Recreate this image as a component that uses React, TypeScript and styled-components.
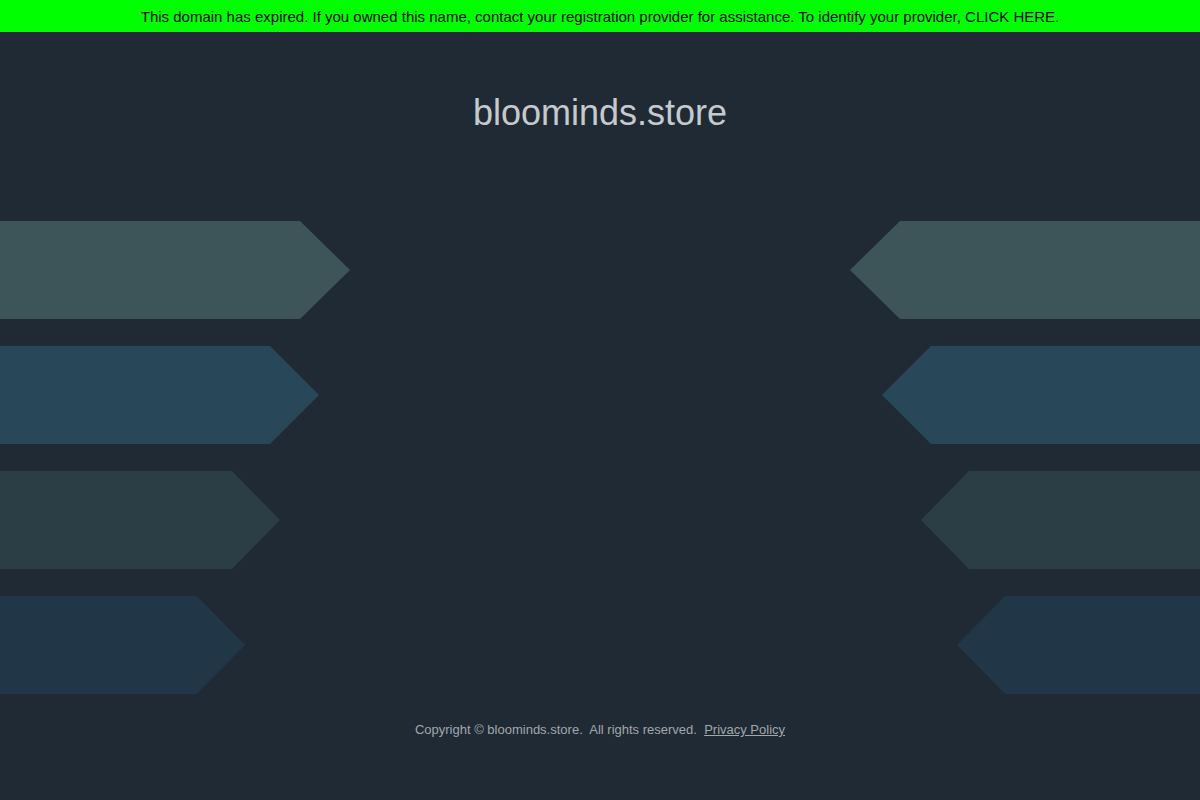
import styled, { createGlobalStyle } from "styled-components";

const GlobalStyle = createGlobalStyle`
  html, body {
    margin: 0;
    padding: 0;
    background: #1f2a35;
    font-family: "Liberation Sans", Arial, sans-serif;
  }
`;

type Side = "left" | "right";

const rows = [
  { left: 300, right: 300, tip: 50, color: "#3d5559" },
  { left: 270, right: 269, tip: 49, color: "#284859" },
  { left: 232, right: 231, tip: 48, color: "#2b3e46" },
  { left: 197, right: 195, tip: 48, color: "#213646" },
];

export default function App() {
  return (
    <Page>
      <GlobalStyle />
      <Banner>
        This domain has expired. If you owned this name, contact your registration provider for
        assistance. To identify your provider, <BannerLink href="#">CLICK HERE</BannerLink>.
      </Banner>
      <Title>bloominds.store</Title>
      <Bars>
        {rows.map((row) => (
          <Row key={row.color}>
            <Arrow>
              <ArrowBody $width={row.left} $color={row.color} />
              <ArrowTip side="left" $width={row.tip} $color={row.color} />
            </Arrow>
            <Arrow>
              <ArrowTip side="right" $width={row.tip} $color={row.color} />
              <ArrowBody $width={row.right} $color={row.color} />
            </Arrow>
          </Row>
        ))}
      </Bars>
      <Footer>
        Copyright © bloominds.store.&nbsp; All rights reserved.&nbsp;{" "}
        <FooterLink href="#">Privacy Policy</FooterLink>
      </Footer>
    </Page>
  );
}

const Page = styled.div`
  min-height: 800px;
  background: #1f2a35;
  display: flex;
  flex-direction: column;
`;

const Banner = styled.div`
  height: 32px;
  background: #00ff00;
  color: #0a0a0a;
  font-size: 15px;
  line-height: 34px;
  text-align: center;
`;

const BannerLink = styled.a`
  color: #0a0a0a;
  text-decoration: none;
`;

const Title = styled.h1`
  margin: 0;
  padding-top: 60px;
  font-size: 36px;
  line-height: 42px;
  font-weight: normal;
  color: #c7cacd;
  text-align: center;
`;

const Bars = styled.div`
  margin-top: 87px;
  display: flex;
  flex-direction: column;
  gap: 27px;
`;

const Row = styled.div`
  height: 98px;
  display: flex;
  justify-content: space-between;
`;

const Arrow = styled.div`
  display: flex;
  height: 100%;
`;

const ArrowBody = styled.div<{ $width: number; $color: string }>`
  width: ${(p) => p.$width}px;
  height: 100%;
  background: ${(p) => p.$color};
`;

const ArrowTip = styled.div<{ side: Side; $width: number; $color: string }>`
  width: ${(p) => p.$width}px;
  height: 100%;
  background: ${(p) => p.$color};
  clip-path: ${(p) =>
    p.side === "left"
      ? "polygon(0 0, 0 100%, 100% 50%)"
      : "polygon(100% 0, 100% 100%, 0 50%)"};
`;

const Footer = styled.div`
  margin-top: 28px;
  font-size: 13px;
  line-height: 15px;
  color: #a3a7ab;
  text-align: center;
`;

const FooterLink = styled.a`
  color: #a3a7ab;
  text-decoration: underline;
`;
